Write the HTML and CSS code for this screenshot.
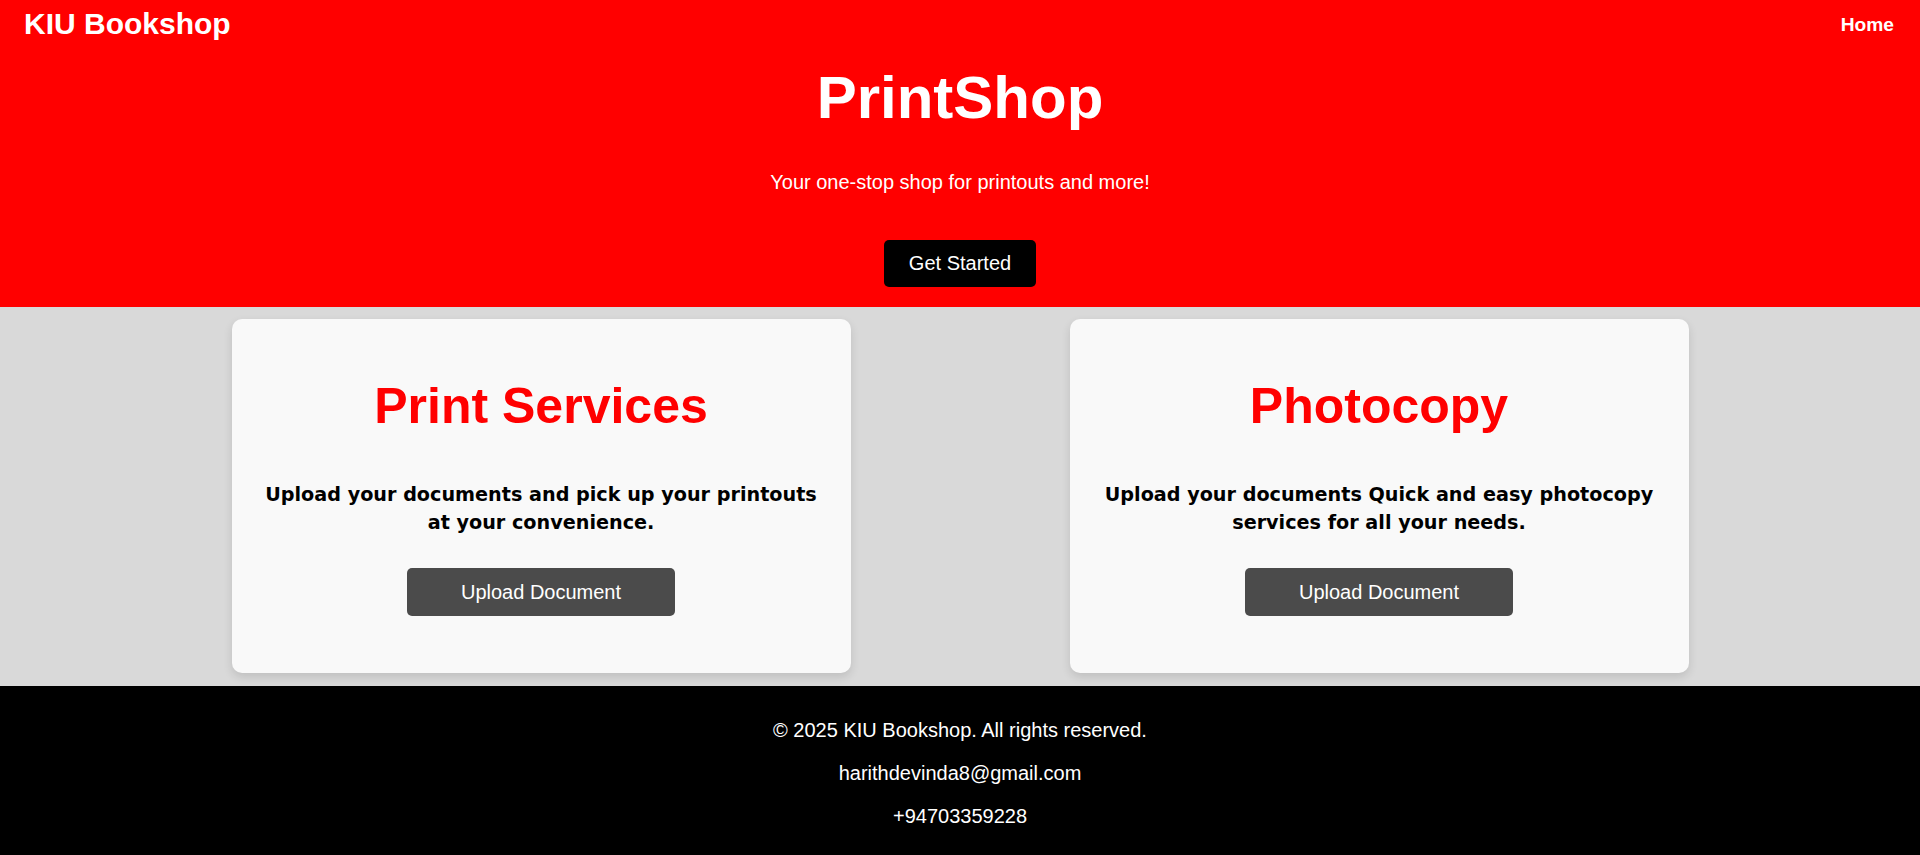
FILE: index.html
```html
<!DOCTYPE html>
<html lang="en">
<head>
<meta charset="utf-8">
<title>KIU Bookshop - PrintShop</title>
<link rel="stylesheet" href="styles.css">
</head>
<body>
<header class="site-header">
  <div class="topbar">
    <div class="logo">KIU Bookshop</div>
    <nav class="nav"><a class="nav-link" href="#">Home</a></nav>
  </div>
  <section class="hero">
    <h1 class="hero-title">PrintShop</h1>
    <p class="hero-text">Your one-stop shop for printouts and more!</p>
    <a class="btn btn-dark" href="#">Get Started</a>
  </section>
</header>
<main class="services">
  <div class="card">
    <h2 class="card-title">Print Services</h2>
    <p class="card-text">Upload your documents and pick up your printouts at your convenience.</p>
    <button class="btn btn-gray" type="button">Upload Document</button>
  </div>
  <div class="card">
    <h2 class="card-title">Photocopy</h2>
    <p class="card-text">Upload your documents Quick and easy photocopy services for all your needs.</p>
    <button class="btn btn-gray" type="button">Upload Document</button>
  </div>
</main>
<footer class="site-footer">
  <p class="footer-line">© 2025 KIU Bookshop. All rights reserved.</p>
  <p class="footer-line">harithdevinda8@gmail.com</p>
  <p class="footer-line">+94703359228</p>
</footer>
</body>
</html>
```
FILE: styles.css
```css
html, body {
  margin: 0;
  padding: 0;
}
html {
  background: #000;
}
body {
  font-family: "Liberation Sans", Arial, sans-serif;
  background: #d9d9d9;
  color: #000;
}
.site-header {
  background: #ff0000;
  color: #fff;
  padding-bottom: 20px;
}
.topbar {
  display: flex;
  justify-content: space-between;
  align-items: center;
  padding: 7px 26px 0 24px;
}
.logo {
  font-size: 30px;
  font-weight: bold;
}
.nav {
  padding-top: 2px;
}
.nav-link {
  color: #fff;
  text-decoration: none;
  font-weight: bold;
  font-size: 19.2px;
}
.hero {
  display: flex;
  flex-direction: column;
  align-items: center;
  text-align: center;
}
.hero-title {
  font-size: 60px;
  font-weight: bold;
  margin: 21.8px 0 39.6px;
}
.hero-text {
  font-size: 20px;
  margin: 0 0 45.6px;
}
.btn {
  display: inline-block;
  font-family: "Liberation Sans", Arial, sans-serif;
  font-size: 20px;
  color: #fff;
  text-decoration: none;
  border: none;
  border-radius: 5px;
  cursor: pointer;
}
.btn-dark {
  background: #000;
  padding: 12px 25px;
  line-height: 23px;
}
.btn-gray {
  background: #4b4b4b;
  padding: 12px 54px;
  line-height: 24px;
}
.services {
  display: flex;
  justify-content: center;
  gap: 219px;
  padding: 12px 0 13px;
  background: #d9d9d9;
}
.card {
  box-sizing: border-box;
  width: 619px;
  background: #f9f9f9;
  border-radius: 10px;
  box-shadow: 0 4px 10px rgba(0, 0, 0, 0.12);
  padding: 58px 25px 57px;
  display: flex;
  flex-direction: column;
  align-items: center;
  text-align: center;
}
.card-title {
  color: #ff0000;
  font-size: 50px;
  font-weight: bold;
  margin: 0 0 46px;
}
.card-text {
  font-family: "DejaVu Sans", Verdana, sans-serif;
  font-weight: bold;
  font-size: 19.2px;
  line-height: 28.3px;
  margin: 0 0 30px;
}
.site-footer {
  background: #000;
  color: #fff;
  text-align: center;
  padding: 13px 0 7px;
}
.footer-line {
  font-size: 20px;
  margin: 20px 0;
}
```
